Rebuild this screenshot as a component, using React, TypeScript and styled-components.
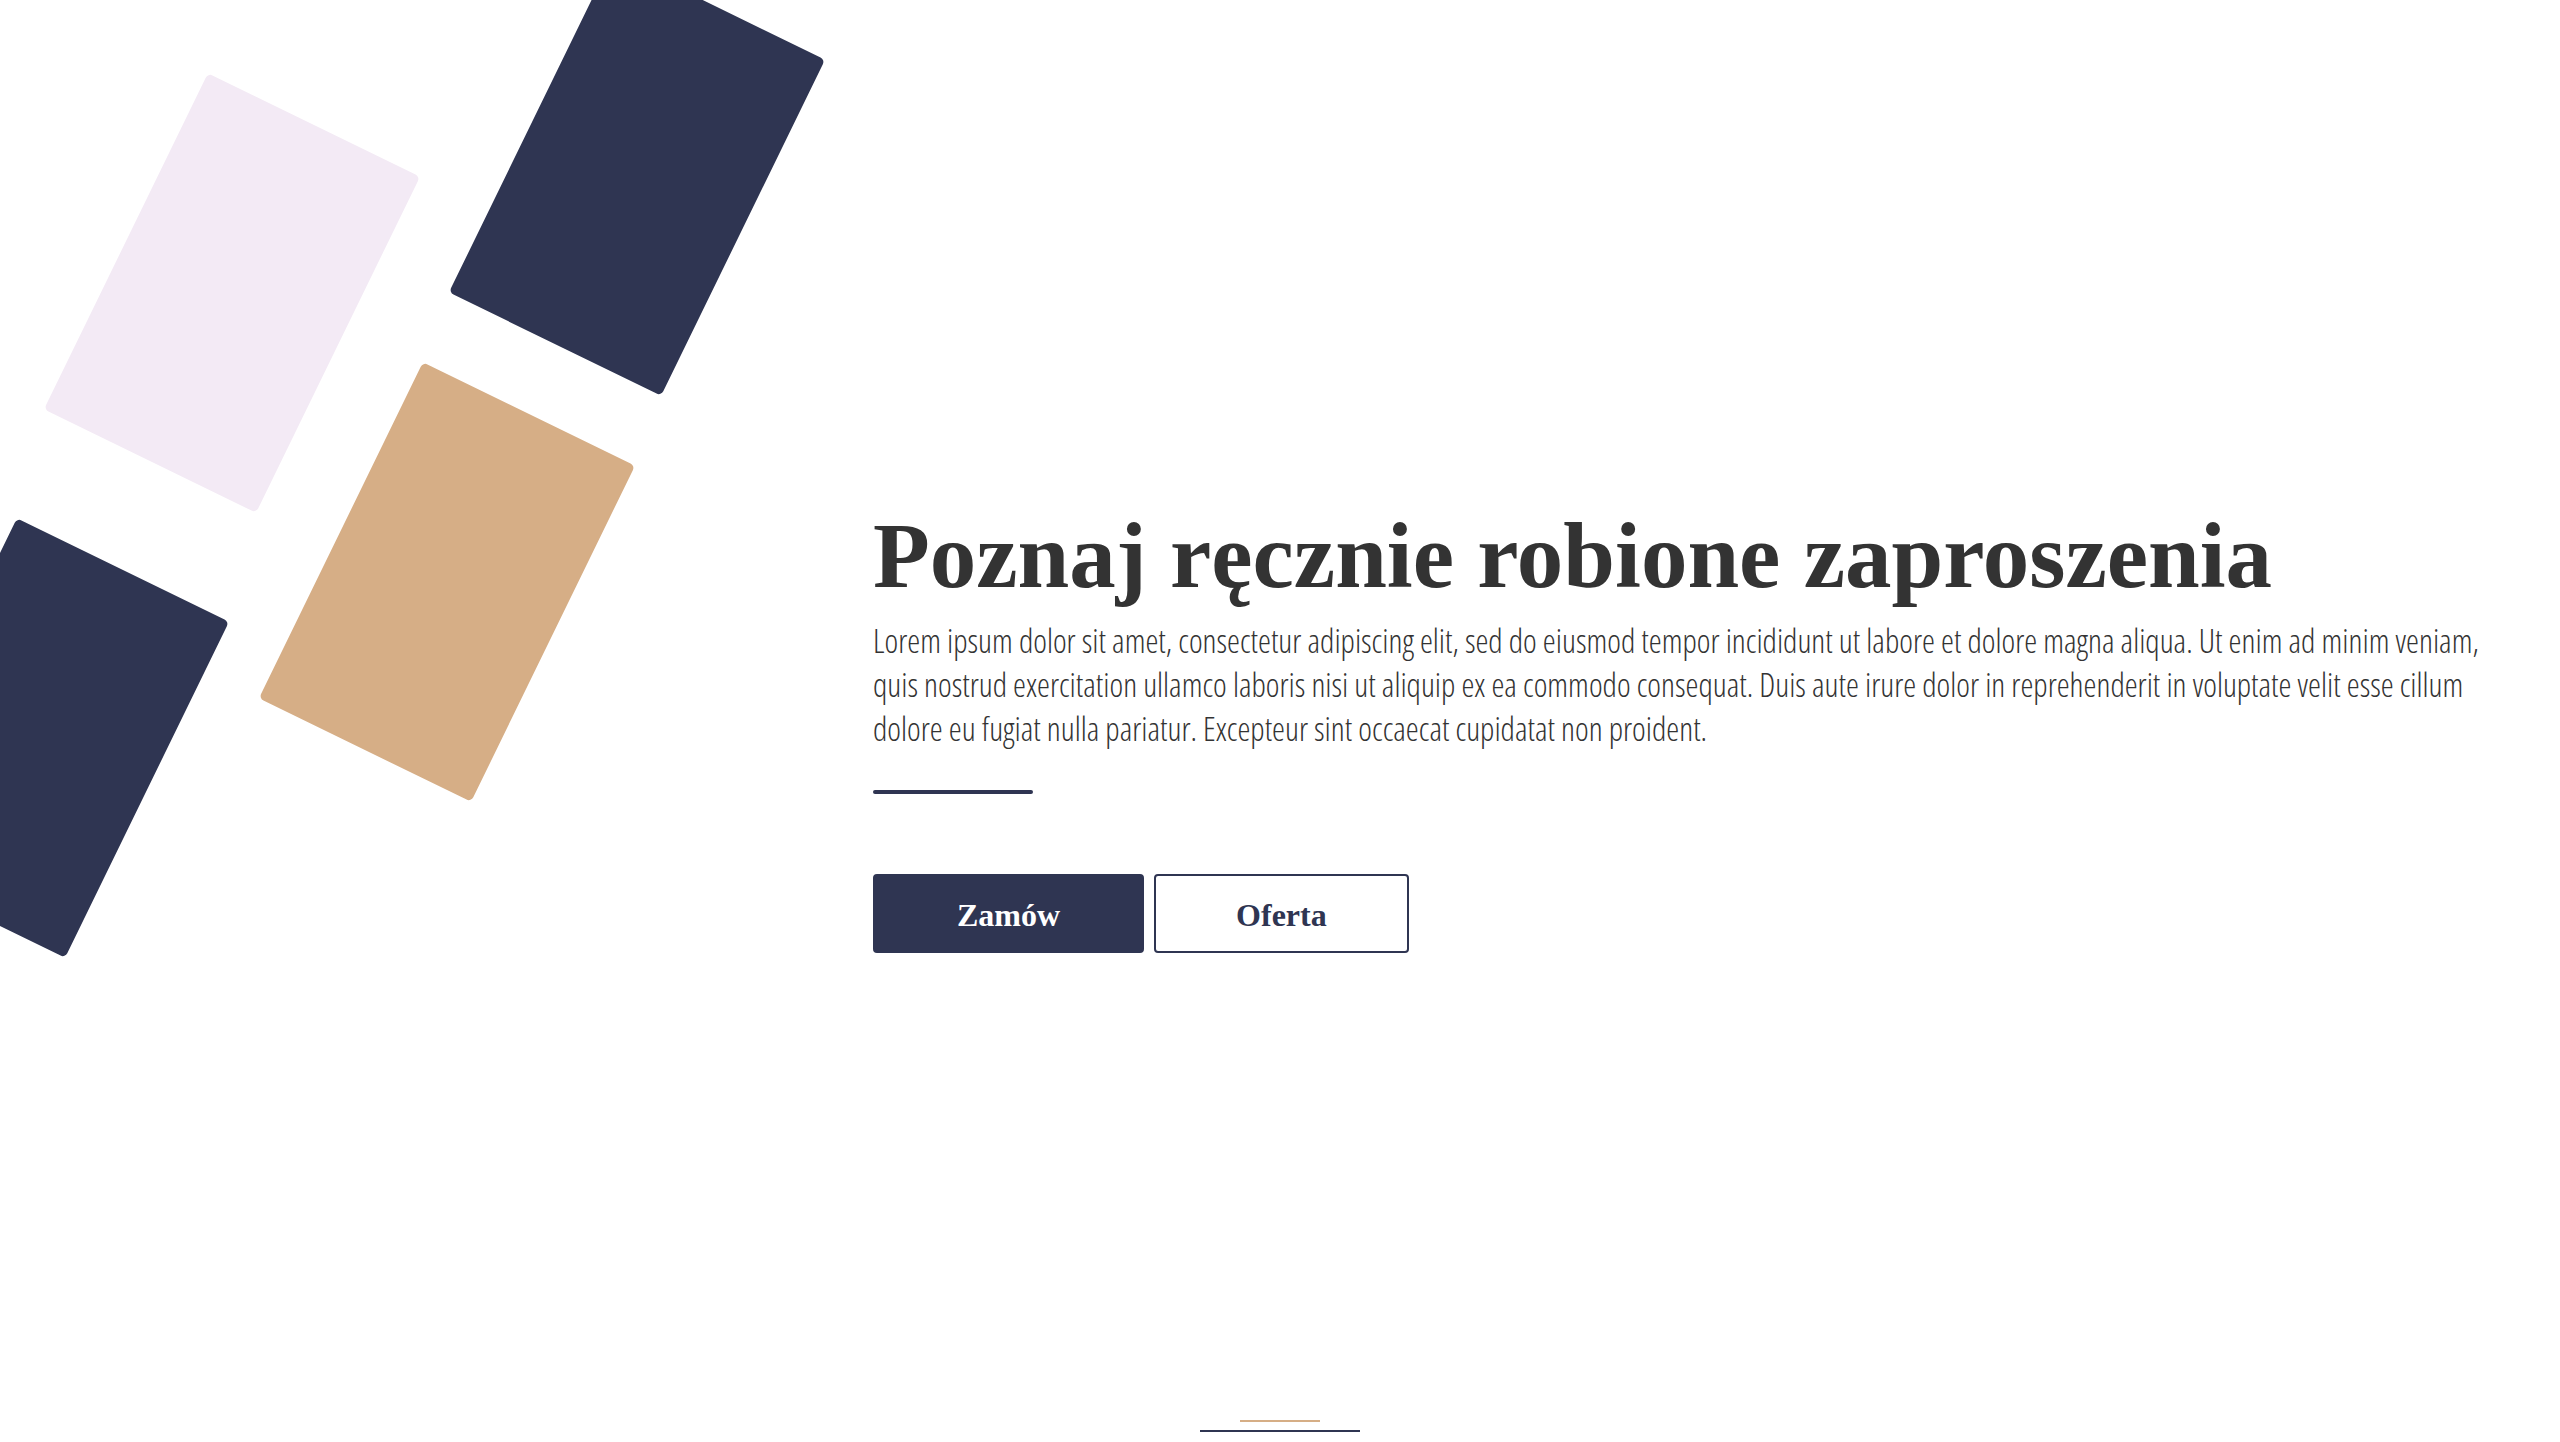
import styled, { createGlobalStyle } from 'styled-components';

const NAVY = '#2f3552';
const TAN = '#d6ae86';
const BLUSH = '#f3eaf5';

const GlobalStyle = createGlobalStyle`
  * {
    box-sizing: border-box;
  }
  html,
  body {
    margin: 0;
    padding: 0;
    background: #fff;
  }
`;

/**
 * kafelki w tle - środek (cx, cy) w px, obrót wspólny
 */
const tiles = [
  { cx: 232, cy: 293, color: BLUSH },
  { cx: 637, cy: 176, color: NAVY },
  { cx: 447, cy: 582, color: TAN },
  { cx: 41, cy: 738, color: NAVY },
];

export default () => {
  return (
    <>
      <GlobalStyle />
      <Hero>
        <Main>
          <Decor>
            {tiles.map((t, i) => (
              <Tile key={i} $cx={t.cx} $cy={t.cy} $color={t.color} />
            ))}
          </Decor>
          <Content>
            <Title>Poznaj ręcznie robione zaproszenia</Title>
            <Lead>
              Lorem ipsum dolor sit amet, consectetur adipiscing elit, sed do eiusmod tempor
              incididunt ut labore et dolore magna aliqua. Ut enim ad minim veniam, quis nostrud
              exercitation ullamco laboris nisi ut aliquip ex ea commodo consequat. Duis aute irure
              dolor in reprehenderit in voluptate velit esse cillum dolore eu fugiat nulla pariatur.
              Excepteur sint occaecat cupidatat non proident.
            </Lead>
            <Divider />
            <Actions>
              <Button $variant="solid">Zamów</Button>
              <Button $variant="outline">Oferta</Button>
            </Actions>
          </Content>
        </Main>
        <ScrollHint>
          <HintLine $color={TAN} $width={80} />
          <HintLine $color={NAVY} $width={160} />
        </ScrollHint>
      </Hero>
    </>
  );
};

const Hero = styled.section`
  height: 100vh;
  display: grid;
  grid-template-rows: 1fr auto;
  overflow: hidden;
`;

const Main = styled.div`
  display: grid;
  grid-template-columns: 873px 1fr;
  align-items: center;
  padding-top: 38px;
`;

const Decor = styled.div`
  position: relative;
  align-self: stretch;
  margin-top: -38px;
`;

const Tile = styled.div<{ $cx: number; $cy: number; $color: string }>`
  position: absolute;
  width: 236px;
  height: 374px;
  left: ${(p) => p.$cx - 118}px;
  top: ${(p) => p.$cy - 187}px;
  background: ${(p) => p.$color};
  border-radius: 5px;
  transform: rotate(26deg);
`;

const Content = styled.div`
  display: flex;
  flex-direction: column;
  align-items: flex-start;
  padding-right: 60px;
`;

const Title = styled.h1`
  margin: 0;
  font-family: 'Liberation Serif', 'Times New Roman', serif;
  font-weight: 700;
  font-size: 93px;
  line-height: 1.1;
  color: #333333;
`;

const Lead = styled.p`
  margin: 12px 0 0;
  font-family: 'Open Sans', 'Liberation Sans', sans-serif;
  font-stretch: 75%;
  font-weight: 300;
  font-size: 32.7px;
  line-height: 44px;
  color: #333333;
`;

const Divider = styled.div`
  width: 160px;
  height: 4px;
  margin-top: 39px;
  border-radius: 2px;
  background: ${NAVY};
`;

const Actions = styled.div`
  display: flex;
  gap: 10px;
  margin-top: 80px;
`;

const Button = styled.button<{ $variant: 'solid' | 'outline' }>`
  height: 79px;
  padding: 3px ${(p) => (p.$variant === 'solid' ? 82 : 80)}px 0;
  border-radius: 4px;
  border: 2px solid ${NAVY};
  background: ${(p) => (p.$variant === 'solid' ? NAVY : '#fff')};
  color: ${(p) => (p.$variant === 'solid' ? '#fff' : NAVY)};
  font-family: 'Liberation Serif', 'Times New Roman', serif;
  font-weight: 700;
  font-size: 32px;
  cursor: pointer;
`;

const ScrollHint = styled.div`
  display: flex;
  flex-direction: column;
  align-items: center;
  gap: 8px;
  padding-bottom: 10px;
`;

const HintLine = styled.span<{ $color: string; $width: number }>`
  display: block;
  width: ${(p) => p.$width}px;
  height: 2px;
  background: ${(p) => p.$color};
`;
